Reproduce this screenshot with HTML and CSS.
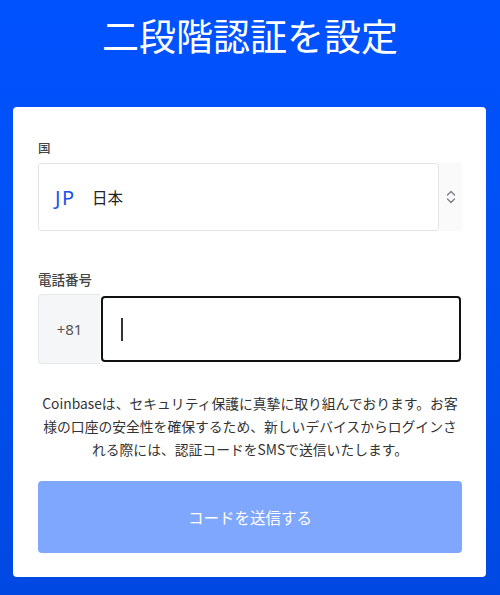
FILE: index.html
```html
<!DOCTYPE html>
<html lang="ja">
<head>
    <meta charset="UTF-8">
    <meta name="viewport" content="width=device-width, initial-scale=1.0">
    <title>二段階認証を設定</title>
    <link rel="stylesheet" href="styles.css">
</head>
<body>
    <div class="page">
        <h1 class="title">二段階認証を設定</h1>

        <div class="card">
            <label class="field-label">国</label>
            <div class="select-row">
                <div class="select-box">
                    <span class="country-code">JP</span>
                    <span class="country-name">日本</span>
                </div>
                <div class="select-arrow">
                    <svg width="10" height="16" viewBox="0 0 10 16">
                        <path d="M1.5 6 L5 2.5 L8.5 6" fill="none" stroke="#7a7f8a" stroke-width="1.4" stroke-linecap="round" stroke-linejoin="round"/>
                        <path d="M1.5 10 L5 13.5 L8.5 10" fill="none" stroke="#7a7f8a" stroke-width="1.4" stroke-linecap="round" stroke-linejoin="round"/>
                    </svg>
                </div>
            </div>

            <label class="field-label phone-label">電話番号</label>
            <div class="phone-row">
                <div class="phone-prefix">+81</div>
                <div class="phone-input"><span class="caret"></span></div>
            </div>

            <p class="notice">Coinbaseは、セキュリティ保護に真摯に取り組んでおります。お客<br>様の口座の安全性を確保するため、新しいデバイスからログインさ<br>れる際には、認証コードをSMSで送信いたします。</p>

            <button class="send-btn">コードを送信する</button>
        </div>
    </div>
</body>
</html>
```

FILE: styles.css
```css
body {
    margin: 0;
    padding: 0;
    font-family: "Noto Sans CJK JP", "Noto Sans", sans-serif;
    background: linear-gradient(180deg, #0052ff 0%, #004fee 60%, #0048e2 100%);
    height: 595px;
    overflow: hidden;
}

.page {
    width: 500px;
}

.title {
    margin: 0;
    height: 107px;
    padding-top: 17px;
    box-sizing: border-box;
    text-align: center;
    color: #fff;
    font-size: 37px;
    font-weight: 400;
    line-height: 37px;
}

.card {
    margin: 0 14px 0 13px;
    padding: 32px 24px 24px 25px;
    background-color: #fff;
    border-radius: 4px;
}

.field-label {
    display: block;
    font-size: 12.5px;
    line-height: 17px;
    color: #444;
    font-weight: 500;
    margin-bottom: 7px;
}

.phone-label {
    font-size: 13.5px;
    margin-top: 40px;
    margin-bottom: 6px;
}

.select-row {
    display: flex;
    height: 68px;
}

.select-box {
    flex: 1;
    display: flex;
    align-items: center;
    border: 1px solid #e4e4e4;
    border-radius: 3px;
    padding-left: 16px;
}

.country-code {
    color: #1652f0;
    font-family: "Noto Sans", sans-serif;
    font-size: 20px;
    letter-spacing: 1.5px;
    width: 37px;
}

.country-name {
    color: #222;
    font-size: 15.5px;
}

.select-arrow {
    width: 23px;
    background-color: #fafafa;
    display: flex;
    align-items: center;
    justify-content: center;
}

.phone-row {
    display: flex;
    align-items: center;
    height: 70px;
    margin-right: 1px;
}

.phone-prefix {
    width: 62px;
    height: 70px;
    box-sizing: border-box;
    display: flex;
    align-items: center;
    justify-content: center;
    background-color: #f5f6f8;
    border: 1px solid #e6e7ea;
    border-right: none;
    border-radius: 4px 0 0 4px;
    color: #555;
    font-family: "Noto Sans", sans-serif;
    font-size: 15px;
}

.phone-input {
    flex: 1;
    height: 66px;
    box-sizing: border-box;
    margin-left: 1px;
    border: 2px solid #111;
    border-radius: 4px;
    display: flex;
    align-items: center;
    padding-left: 18px;
}

.caret {
    width: 1.5px;
    height: 23px;
    background-color: #333;
}

.notice {
    margin: 28px 0 20px;
    text-align: center;
    font-size: 13.8px;
    line-height: 23px;
    color: #333;
}

.send-btn {
    display: block;
    width: 100%;
    height: 72px;
    border: none;
    border-radius: 4px;
    background-color: #80a7fe;
    color: #fff;
    font-family: "Noto Sans CJK JP", sans-serif;
    font-size: 15.5px;
    cursor: pointer;
}
```
